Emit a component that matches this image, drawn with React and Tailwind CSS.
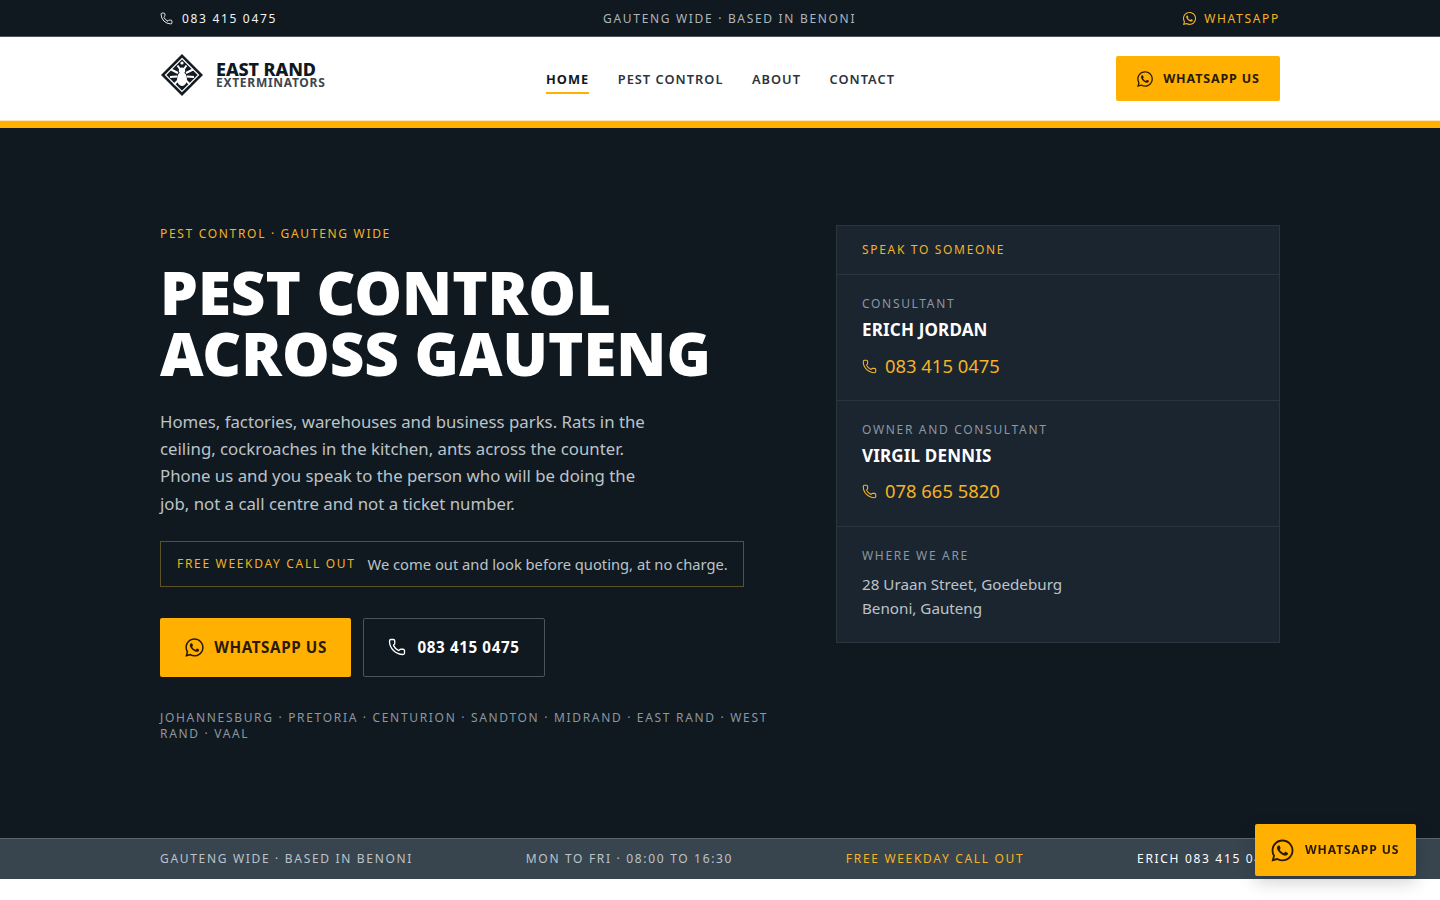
import React from "react";
import { Phone } from "lucide-react";
import { FaWhatsapp } from "react-icons/fa";

function Logo() {
  return (
    <svg width="42" height="42" viewBox="0 0 42 42" className="shrink-0">
      <path d="M21 0 L42 21 L21 42 L0 21 Z" fill="#141b22" />
      <path d="M21 4.5 L37.5 21 L21 37.5 L4.5 21 Z" fill="none" stroke="#fff" strokeWidth="1.2" />
      <g stroke="#fff" strokeWidth="2" fill="none">
        <path d="M10 15.5 L17 19 M32 15.5 L25 19 M9 23 L16 22.5 M33 23 L26 22.5 M13 30.5 L17.5 26 M29 30.5 L24.5 26 M16.5 11.5 L19 15 M25.5 11.5 L23 15" />
      </g>
      <ellipse cx="21" cy="16.5" rx="3.2" ry="3" fill="#fff" />
      <ellipse cx="21" cy="25" rx="5" ry="7" fill="#fff" />
      <circle cx="21" cy="9" r="1.6" fill="#fff" />
    </svg>
  );
}

function Contact({ role, name, phone, top }) {
  return (
    <div className="h-[126px] border-b border-[#2a3540] pt-[20px] pr-6 pl-[25px]">
      <div className="text-[12px] leading-[18px] tracking-[0.14em] text-[#8c97a1]">{role}</div>
      <div className="mt-[5px] text-[17px] leading-[24px] font-bold tracking-[0.01em] text-white">{name}</div>
      <div className={top ? "mt-[11px] flex items-center gap-[8px] text-[18.4px] leading-[26px] text-[#f5b324]" : "mt-[10px] flex items-center gap-[8px] text-[18.4px] leading-[26px] text-[#f5b324]"}>
        <Phone size={15} strokeWidth={1.75} />
        <span>{phone}</span>
      </div>
    </div>
  );
}

export default function App() {
  return (
    <div className="min-h-[900px] bg-white font-['Noto_Sans',sans-serif]">
      <div className="h-[37px] border-b border-[#4a545c] bg-[#10191f]">
        <div className="mx-auto flex h-[36px] w-[1120px] items-center justify-between pt-[1px] text-[12px] tracking-[0.14em]">
          <div className="flex items-center gap-[9px] text-[#f3f4f6]">
            <Phone size={13} strokeWidth={1.75} />
            <span>083 415 0475</span>
          </div>
          <div className="text-[#aeb6bd]">GAUTENG WIDE · BASED IN BENONI</div>
          <div className="flex items-center gap-[7px] text-[#f5b324]">
            <FaWhatsapp size={15} />
            <span>WHATSAPP</span>
          </div>
        </div>
      </div>

      <div className="h-[91px] border-b-[7px] border-[#ffb000] bg-white shadow-[inset_0_-1px_0_#f8e6bb]">
        <div className="mx-auto flex h-[84px] w-[1120px] items-center">
          <div className="mb-[8px] ml-[1px] flex w-[385px] items-center gap-[13px]">
            <Logo />
            <div className="mb-[2px]">
              <div className="text-[18px] leading-[16px] font-extrabold tracking-[-0.005em] text-[#10191f]">EAST RAND</div>
              <div className="text-[12px] leading-[11px] font-bold tracking-[0.06em] text-[#3d4650]">EXTERMINATORS</div>
            </div>
          </div>
          <nav className="flex items-center gap-[28.5px] text-[12.8px] font-semibold tracking-[0.08em] text-[#2b343c]">
            <div className="border-b-2 border-[#ffb000] pt-[5px] pb-[4px] leading-[18px] font-bold text-[#10191f]">HOME</div>
            <div className="border-b-2 border-transparent pt-[5px] pb-[4px] leading-[18px]">PEST CONTROL</div>
            <div className="border-b-2 border-transparent pt-[5px] pb-[4px] leading-[18px]">ABOUT</div>
            <div className="border-b-2 border-transparent pt-[5px] pb-[4px] leading-[18px]">CONTACT</div>
          </nav>
          <div className="mb-[2px] ml-auto flex h-[45px] w-[164px] items-center justify-center gap-[9px] rounded-[2px] bg-[#ffb000] pt-[2px] text-[12.48px] font-bold tracking-[0.07em] text-[#2a1a05]">
            <FaWhatsapp size={18} />
            <span>WHATSAPP US</span>
          </div>
        </div>
      </div>

      <div className="h-[710px] bg-[#10191f]">
        <div className="mx-auto grid w-[1120px] grid-cols-[628px_444px] gap-[48px] pt-[97px]">
          <div>
            <div className="text-[12px] leading-[18px] tracking-[0.14em] text-[#f5b324]">PEST CONTROL · GAUTENG WIDE</div>
            <h1 className="mt-[19px] text-[60px] leading-[61px] font-black text-white">
              PEST CONTROL<br />ACROSS GAUTENG
            </h1>
            <p className="mt-[24px] w-[500px] text-[16.8px] leading-[27.2px] text-[#bcc3c9]">
              Homes, factories, warehouses and business parks. Rats in the ceiling, cockroaches in the kitchen, ants across the counter. Phone us and you speak to the person who will be doing the job, not a call centre and not a ticket number.
            </p>
            <div className="mt-[24px] flex h-[46px] w-[584px] items-center gap-[12px] border border-[#5c5226] pl-[16px]">
              <span className="text-[12px] tracking-[0.14em] text-[#f5b324]">FREE WEEKDAY CALL OUT</span>
              <span className="text-[14.72px] text-[#bcc3c9]">We come out and look before quoting, at no charge.</span>
            </div>
            <div className="mt-[31px] flex gap-[12px]">
              <div className="flex h-[59px] w-[191px] items-center justify-center gap-[9px] rounded-[2px] bg-[#ffb000] text-[15.2px] font-bold tracking-[0.04em] text-[#2a1a05]">
                <FaWhatsapp size={21} />
                <span>WHATSAPP US</span>
              </div>
              <div className="flex h-[59px] w-[182px] items-center justify-center gap-[11px] rounded-[2px] border border-[#4a545c] text-[15.2px] font-bold tracking-[0.04em] text-white">
                <Phone size={18} strokeWidth={1.75} />
                <span>083 415 0475</span>
              </div>
            </div>
            <div className="mt-[33px] text-[12px] leading-[16px] tracking-[0.14em] text-[#8c97a1]">
              JOHANNESBURG · PRETORIA · CENTURION · SANDTON · MIDRAND · EAST RAND · WEST RAND · VAAL
            </div>
          </div>
          <div className="h-[418px] border border-[#2a3540] bg-[#1a2530]">
            <div className="h-[49px] border-b border-[#2a3540] pt-[15px] pr-6 pl-[25px] text-[12px] leading-[18px] tracking-[0.14em] text-[#f5b324]">SPEAK TO SOMEONE</div>
            <Contact role="CONSULTANT" name="ERICH JORDAN" phone="083 415 0475" top />
            <Contact role="OWNER AND CONSULTANT" name="VIRGIL DENNIS" phone="078 665 5820" />
            <div className="pt-[20px] pr-6 pl-[25px]">
              <div className="text-[12px] leading-[18px] tracking-[0.14em] text-[#8c97a1]">WHERE WE ARE</div>
              <div className="mt-[7px] text-[15.2px] leading-[24px] text-[#bcc3c9]">28 Uraan Street, Goedeburg<br />Benoni, Gauteng</div>
            </div>
          </div>
        </div>
      </div>

      <div className="h-[41px] overflow-hidden border-t border-[#5a6872] bg-[#38454f] pl-[160px]">
        <div className="flex h-[40px] w-max items-center gap-[112.7px] text-[12px] tracking-[0.14em] whitespace-nowrap">
          <span className="text-[#bcc3c9]">GAUTENG WIDE · BASED IN BENONI</span>
          <span className="text-[#bcc3c9]">MON TO FRI · 08:00 TO 16:30</span>
          <span className="text-[#f5b324]">FREE WEEKDAY CALL OUT</span>
          <span className="text-white">ERICH 083 415 0475</span>
        </div>
      </div>

      <div className="fixed top-[824px] right-[24px] flex h-[52px] w-[161px] items-center gap-[10px] rounded-[2px] bg-[#ffb000] pl-[15px] text-[12.16px] font-bold tracking-[0.07em] text-[#2a1a05] shadow-[0_6px_18px_rgba(0,0,0,0.18)]">
        <FaWhatsapp size={25} />
        <span>WHATSAPP US</span>
      </div>
    </div>
  );
}
